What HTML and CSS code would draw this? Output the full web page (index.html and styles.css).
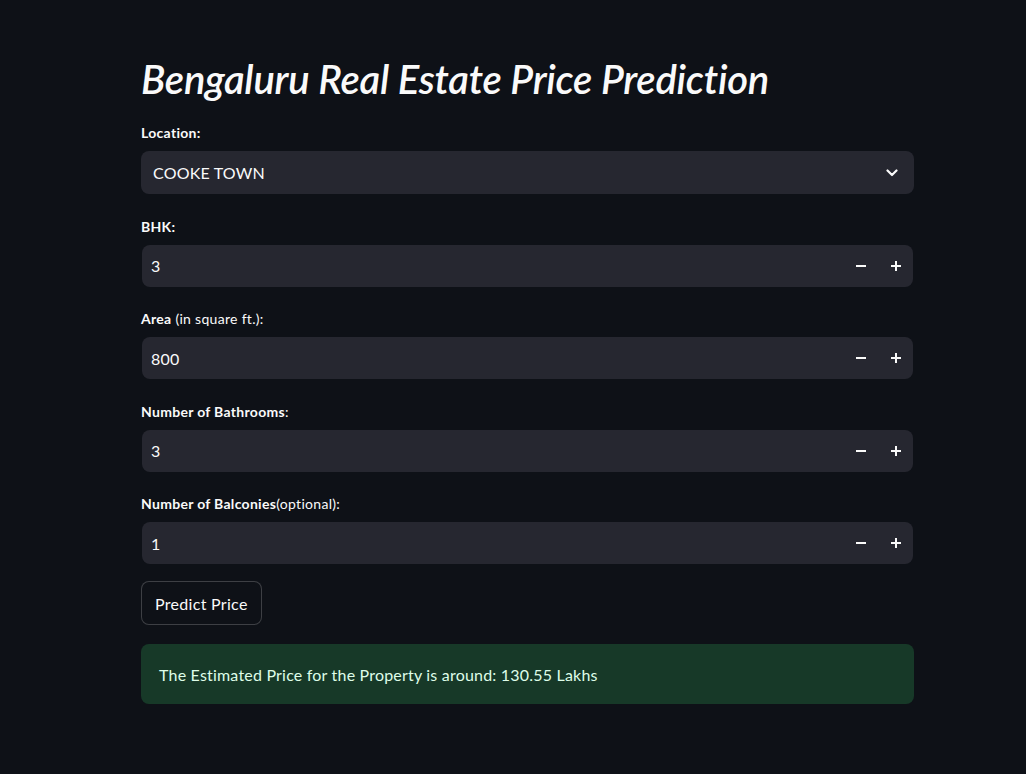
FILE: index.html
```html
<!DOCTYPE html>
<html>
<head>
<meta charset="utf-8">
<link rel="stylesheet" href="styles.css">
</head>
<body>
<main class="main">
  <h1 class="title">Bengaluru Real Estate Price Prediction</h1>

  <div class="field">
    <label class="label"><b>Location:</b></label>
    <div class="select">
      <span class="value">COOKE TOWN</span>
      <svg class="chev" width="12" height="8" viewBox="0 0 12 8"><path d="M1.5 1.5 L6 6 L10.5 1.5" fill="none" stroke="#FAFAFA" stroke-width="2.2" stroke-linecap="round" stroke-linejoin="round"/></svg>
    </div>
  </div>

  <div class="field">
    <label class="label"><b>BHK:</b></label>
    <div class="number">
      <span class="value">3</span>
      <div class="steps">
        <span class="step"><svg width="10" height="10" viewBox="0 0 10 10"><path d="M0 5 H10" stroke="#FAFAFA" stroke-width="2"/></svg></span>
        <span class="step"><svg width="10" height="10" viewBox="0 0 10 10"><path d="M0 5 H10 M5 0 V10" stroke="#FAFAFA" stroke-width="2"/></svg></span>
      </div>
    </div>
  </div>

  <div class="field">
    <label class="label"><b>Area</b> (in square ft.):</label>
    <div class="number">
      <span class="value">800</span>
      <div class="steps">
        <span class="step"><svg width="10" height="10" viewBox="0 0 10 10"><path d="M0 5 H10" stroke="#FAFAFA" stroke-width="2"/></svg></span>
        <span class="step"><svg width="10" height="10" viewBox="0 0 10 10"><path d="M0 5 H10 M5 0 V10" stroke="#FAFAFA" stroke-width="2"/></svg></span>
      </div>
    </div>
  </div>

  <div class="field">
    <label class="label"><b>Number of Bathrooms</b>:</label>
    <div class="number">
      <span class="value">3</span>
      <div class="steps">
        <span class="step"><svg width="10" height="10" viewBox="0 0 10 10"><path d="M0 5 H10" stroke="#FAFAFA" stroke-width="2"/></svg></span>
        <span class="step"><svg width="10" height="10" viewBox="0 0 10 10"><path d="M0 5 H10 M5 0 V10" stroke="#FAFAFA" stroke-width="2"/></svg></span>
      </div>
    </div>
  </div>

  <div class="field">
    <label class="label"><b>Number of Balconies</b>(optional):</label>
    <div class="number">
      <span class="value">1</span>
      <div class="steps">
        <span class="step"><svg width="10" height="10" viewBox="0 0 10 10"><path d="M0 5 H10" stroke="#FAFAFA" stroke-width="2"/></svg></span>
        <span class="step"><svg width="10" height="10" viewBox="0 0 10 10"><path d="M0 5 H10 M5 0 V10" stroke="#FAFAFA" stroke-width="2"/></svg></span>
      </div>
    </div>
  </div>

  <div class="actions">
    <button class="btn">Predict Price</button>
  </div>

  <div class="alert">The Estimated Price for the Property is around: 130.55 Lakhs</div>
</main>
</body>
</html>
```

FILE: styles.css
```css
html, body {
  margin: 0;
  padding: 0;
  background: #0E1117;
  color: #FAFAFA;
  font-family: "Lato", "Liberation Sans", sans-serif;
}

.main {
  width: 773px;
  margin-left: 141px;
  padding-top: 55px;
  display: flex;
  flex-direction: column;
}

.title {
  margin: 0 0 19px 0;
  font-size: 40px;
  line-height: 48px;
  font-style: italic;
  font-weight: 600;
  letter-spacing: -0.25px;
}

.field {
  display: flex;
  flex-direction: column;
  gap: 8px;
  margin-bottom: 21.5px;
}

.label {
  font-size: 14px;
  line-height: 21px;
  font-weight: 400;
  letter-spacing: 0.3px;
}

.label b {
  font-weight: 700;
}

.select {
  height: 43px;
  background: #262730;
  border-radius: 8px;
  display: flex;
  align-items: center;
  justify-content: space-between;
  padding: 0 16px 0 12px;
}

.number {
  height: 42px;
  margin: 0 1px;
  background: #262730;
  border-radius: 8px;
  display: flex;
  align-items: center;
  justify-content: space-between;
  padding: 0 0 0 9px;
}

.value {
  font-size: 16px;
  letter-spacing: 0.2px;
}

.steps {
  display: flex;
  height: 100%;
}

.step {
  width: 35px;
  display: flex;
  align-items: center;
  justify-content: center;
}

.chev {
  display: block;
}

.actions {
  display: flex;
  margin-top: -4.5px;
  margin-bottom: 19px;
}

.btn {
  height: 44px;
  padding: 0 13px;
  background: #0E1117;
  color: #FAFAFA;
  border: 1px solid rgba(250, 250, 250, 0.2);
  border-radius: 8px;
  font-family: inherit;
  font-size: 16px;
  letter-spacing: 0.3px;
}

.alert {
  height: 60px;
  box-sizing: border-box;
  background: #173928;
  color: #DFFDE9;
  border-radius: 8px;
  padding: 0 18px;
  display: flex;
  align-items: center;
  font-size: 16px;
  letter-spacing: 0.2px;
}
```
